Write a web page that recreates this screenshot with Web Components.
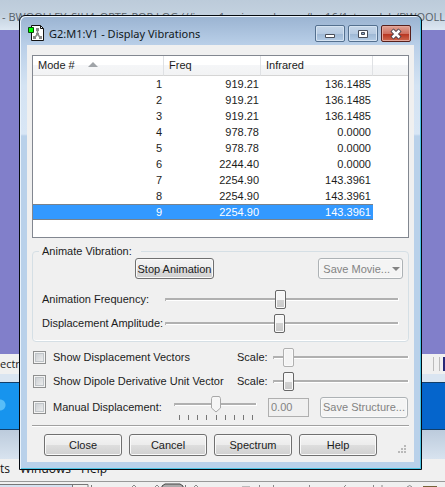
<!DOCTYPE html>
<html lang="en">
<head>
<meta charset="utf-8">
<title>Display Vibrations</title>
<style>
html, body { margin: 0; height: 100%; }
body { font: 11px/16px "Liberation Sans", Arial, sans-serif; color: #1c1c1c; overflow: hidden; }
</style>
</head>
<body>
<app-desktop>
  <vib-window heading="G2:M1:V1 - Display Vibrations">
    <mode-list></mode-list>
    <group-box heading="Animate Vibration:">
      <animation-controls></animation-controls>
    </group-box>
    <display-options></display-options>
    <dialog-actions></dialog-actions>
  </vib-window>
</app-desktop>
<script>
const BUTTON_CSS = `
button { box-sizing: border-box; height: 21px; padding: 0; font: inherit; color: #1c1c1c; border: 1px solid #707070; border-radius: 3px;
  background: linear-gradient(#f4f4f4, #ececec 50%, #dedede 50%, #d0d0d0); box-shadow: inset 0 0 0 1px #fafafa; white-space: nowrap; }
button:disabled { color: #838383; border-color: #adb2b5; background: #f4f4f4; }
`;

function define(name, html, setup) {
  const template = document.createElement('template');
  template.innerHTML = html;
  customElements.define(name, class extends HTMLElement {
    constructor() {
      super();
      this.attachShadow({ mode: 'open' }).append(template.content.cloneNode(true));
    }
    connectedCallback() { if (setup) setup(this, this.shadowRoot); }
  });
}

define('trim-slider', `
<style>
:host { display: block; min-width: 0; }
input { -webkit-appearance: none; appearance: none; display: block; width: 100%; height: 19px; margin: 0; background: none; }
input::-webkit-slider-runnable-track { height: 3px; background: linear-gradient(#b0b0b0 0 2px, #fff 2px); border-left: 1px solid #b4b4b4; border-right: 1px solid #fff; box-sizing: border-box; }
input::-webkit-slider-thumb { -webkit-appearance: none; box-sizing: border-box; width: 11px; height: 19px; margin-top: -8px;
  border: 1px solid #666; border-radius: 2px; background: linear-gradient(#f5f5f5 50%, #d2d2d2 50%, #c8c8c8); box-shadow: inset 0 0 0 1px #fafafa; }
input:disabled::-webkit-slider-thumb { border-color: #b0b0b0; background: #f4f4f4; }
:host([pointed]) input { height: 17px; }
:host([pointed]) input::-webkit-slider-thumb { width: 10px; height: 17px; margin-top: -7px; border: 0; border-radius: 0; box-shadow: none;
  background: url("data:image/svg+xml,%3Csvg xmlns='http://www.w3.org/2000/svg' width='10' height='17'%3E%3Cpath d='M.5 2.500l1-2h7l1 2v9.500l-4.500 4-4.500-4z' fill='%23f6f6f6' stroke='%23a8a8a8'/%3E%3C/svg%3E"); }
.ticks { display: none; justify-content: space-between; padding: 2px 4px 0 5px; }
:host([pointed]) .ticks { display: flex; }
.ticks i { width: 1px; height: 5px; background: #777; }
</style>
<input type="range" min="0" max="1000">
<div class="ticks"><i></i><i></i><i></i><i></i><i></i><i></i><i></i><i></i><i></i></div>
`, (host, root) => {
  const input = root.querySelector('input');
  input.value = host.getAttribute('value');
  input.disabled = host.hasAttribute('disabled');
  input.setAttribute('aria-label', host.getAttribute('label'));
});

define('check-option', `
<style>
:host { display: block; }
label { display: flex; align-items: center; gap: 7px; white-space: nowrap; }
input { -webkit-appearance: none; appearance: none; box-sizing: border-box; flex: none; width: 13px; height: 13px; margin: 0; border: 1px solid #8e8f8f;
  background: linear-gradient(135deg, #c6cace, #f3f3f3); box-shadow: inset 0 0 0 1px #f4f4f4, inset 0 0 0 2px #bfc4c8; }
input:checked { background: #4b6097; }
</style>
<label><input type="checkbox"><span><slot></slot></span></label>
`);

define('mode-list', `
<style>
:host { display: block; box-sizing: border-box; height: 183px; border: 1px solid #828790; background: #fff; overflow: hidden; }
table { width: 100%; table-layout: fixed; border-collapse: separate; border-spacing: 0; }
th { padding: 0 0 0 5px; text-align: left; font-weight: normal; line-height: 19px; border-right: 1px solid #dfe1e4; border-bottom: 1px solid #d5d5d5;
  background: linear-gradient(#fff 50%, #f5f6f8 50%, #f2f3f4); box-sizing: border-box; }
th:last-child { border-right: 0; }
td { height: 16px; padding: 0 2px 0 0; text-align: right; line-height: 16px; }
.selected td { height: 16px; background: #3399ff; color: #fff; box-shadow: inset 0 1px #78828c, inset 0 -1px #78828c; }
.selected td:last-child { background: none; box-shadow: none; }
.sort { display: inline-block; margin-left: 13px; vertical-align: 2px; border: 5px solid transparent; border-top: 0; border-bottom-color: #a0a4a8; }
</style>
<table>
<colgroup><col style="width:131px"><col style="width:97px"><col style="width:112px"><col></colgroup>
<thead><tr><th>Mode #<span class="sort"></span></th><th>Freq</th><th>Infrared</th><th></th></tr></thead>
<tbody></tbody>
</table>
`, (host, root) => {
  const rows = [['919.21', '136.1485'], ['919.21', '136.1485'], ['919.21', '136.1485'], ['978.78', '0.0000'], ['978.78', '0.0000'],
    ['2244.40', '0.0000'], ['2254.90', '143.3961'], ['2254.90', '143.3961'], ['2254.90', '143.3961']];
  root.querySelector('tbody').innerHTML = rows.map(([freq, ir], i) =>
    `<tr${i === 8 ? ' class="selected"' : ''}><td>${i + 1}</td><td>${freq}</td><td>${ir}</td><td></td></tr>`).join('');
});

define('group-box', `
<style>
:host { display: block; margin-top: 6px; }
fieldset { margin: 0; padding: 0 5px 6px 6px; border: 1px solid #d5dfe5; border-radius: 4px; min-width: 0; box-shadow: inset 0 -1px #fff; }
legend { padding: 0 9px 0 3px; line-height: 14px; }
</style>
<fieldset><legend></legend><slot></slot></fieldset>
`, (host, root) => { root.querySelector('legend').textContent = host.getAttribute('heading'); });

define('animation-controls', `
<style>
${BUTTON_CSS}
:host { display: block; }
.buttons { display: flex; justify-content: space-between; padding: 0 0 0 96px; }
.stop { width: 79px; }
.movie { width: 85px; display: flex; align-items: center; justify-content: flex-end; gap: 2px; padding-right: 2px; }
.movie i { border: 4px solid transparent; border-bottom: 0; border-top-color: #838383; }
.row { display: grid; grid-template-columns: 118px 1fr; align-items: center; gap: 5px; height: 24px; padding: 0 4px 0 3px; white-space: nowrap; }
.rows { padding-top: 8px; }
</style>
<div class="buttons"><button class="stop">Stop Animation</button><button class="movie" disabled>Save Movie...<i></i></button></div>
<div class="rows">
<div class="row"><span>Animation Frequency:</span><trim-slider value="493" label="Animation Frequency"></trim-slider></div>
<div class="row"><span>Displacement Amplitude:</span><trim-slider value="489" label="Displacement Amplitude"></trim-slider></div>
</div>
`);

define('display-options', `
<style>
${BUTTON_CSS}
:host { display: block; padding: 3px 0 4px 1px; border-bottom: 1px solid #a0a0a0; box-shadow: 0 1px #fff; }
.row { display: grid; grid-template-columns: 199px 31px 1fr; gap: 5px; align-items: center; height: 24px; }
.manual { display: flex; align-items: center; height: 28px; padding-right: 1px; }
.manual check-option { width: 141px; }
.manual trim-slider { flex: 1; padding-top: 2px; }
.manual input { box-sizing: border-box; width: 41px; height: 19px; margin: 0 11px 0 11px; padding: 0 2px; border: 1px solid #afafaf; background: #f0f0f0; color: #838383; font: inherit; }
.manual button { width: 88px; }
</style>
<div class="row"><check-option>Show Displacement Vectors</check-option><span>Scale:</span><trim-slider value="72" disabled label="Displacement vector scale"></trim-slider></div>
<div class="row"><check-option>Show Dipole Derivative Unit Vector</check-option><span>Scale:</span><trim-slider value="72" label="Dipole vector scale"></trim-slider></div>
<div class="manual"><check-option>Manual Displacement:</check-option><trim-slider pointed value="500" disabled label="Manual displacement"></trim-slider><input value="0.00" disabled aria-label="Displacement value"><button disabled>Save Structure...</button></div>
`);

define('dialog-actions', `
<style>
${BUTTON_CSS}
:host { display: flex; gap: 7px; padding: 8px 2px 6px 12px; }
button { flex: 0 1 78px; height: 22px; }
svg { margin: 11px 0 0 auto; }
</style>
<button>Close</button><button>Cancel</button><button>Spectrum</button><button>Help</button>
<svg width="9" height="9" fill="#b9b9b9"><path d="M6 0h2v2h-2zM3 3h2v2h-2zM6 3h2v2h-2zM0 6h2v2h-2zM3 6h2v2h-2zM6 6h2v2h-2z"/></svg>
`);

define('vib-window', `
<style>
:host { display: flex; flex-direction: column; box-sizing: border-box; border: 1px solid #050a10; border-radius: 6px 6px 0 0; padding: 1px 7px 7px;
  background: linear-gradient(#9ab3d1, #b9cfe8 29px, #d4e3f3 70px, #d8e6f5 118px, #b9d1ea 120px); box-shadow: inset 1px 1px #eaf3fb, inset -1px -1px #4cc4e4; }
header { display: flex; align-items: flex-start; height: 28px; color: #101820; }
.icon { flex: none; margin: 8px 4px 0 1px; }
h1 { flex: 1; margin: 9px 0 0; font: 11px/16px "Noto Sans", sans-serif; white-space: nowrap; }
nav { display: flex; gap: 3px; padding: 8px 3px 0 0; }
nav button { box-sizing: border-box; width: 30px; height: 17px; padding: 0; display: grid; place-items: center; border: 1px solid #54708f; border-radius: 2px;
  background: linear-gradient(#c5d6e9, #b7cbe2 50%, #9cb6d3 50%, #b4cce6); box-shadow: inset 0 0 0 1px #d5e3f2; }
nav .close { border-color: #57201c; background: linear-gradient(#e0a295, #cf7060 50%, #b5301c 50%, #d0694f); box-shadow: inset 0 0 0 1px #e5a79b; }
main { box-sizing: border-box; padding: 10px 5px 0; background: #f0f0f0; }
</style>
<header>
<svg class="icon" width="17" height="17" viewBox="0 0 17 17"><path d="M3.500.5h9l3 3v12h-12z" fill="#fff" stroke="#111"/><path d="M12.500.5v3h3" fill="none" stroke="#111"/><path d="M9.500 4v5l-3 4M9.500 9l3 4" fill="none" stroke="#888" stroke-width="1.500"/><path d="M8 3h3v3H8zM8 8h3v2H8zM5 11h3v3H5zM11 11h3v3h-3z" fill="#888"/><path d="M.5 2.500h5v5h-5z" fill="#0f0" stroke="#064806"/></svg>
<h1></h1>
<nav>
<button aria-label="Minimize"><svg width="12" height="12"><path d="M1.500 6.500h9v3h-9z" fill="#fff" stroke="#484d58"/></svg></button>
<button aria-label="Maximize"><svg width="12" height="12"><path d="M1.500 2.500h9v7h-9z" fill="#fff" stroke="#484d58"/><path d="M4.500 4.500h3v2h-3z" fill="#8ca8cc" stroke="#484d58"/></svg></button>
<button class="close" aria-label="Close window"><svg width="12" height="12"><path d="M2 2l8 8M10 2l-8 8" stroke="#47404a" stroke-width="4.500"/><path d="M2.500 2.500l7 7M9.500 2.500l-7 7" stroke="#fff" stroke-width="2.500"/></svg></button>
</nav>
</header>
<main><slot></slot></main>
`, (host, root) => { root.querySelector('h1').textContent = host.getAttribute('heading'); });

define('app-desktop', `
<style>
:host { display: grid; position: relative; height: 100%; overflow: hidden; grid-template-rows: 30px 324px 20px 8px 48px 29px 22px 1fr; grid-template-columns: minmax(0, 1fr); background: #f0f0f0; }
.title { padding: 9px 0 0 2px; background: linear-gradient(#bccbda, #c3d1df 50%, #dce7f2); font: 11px/16px "Open Sans", "Noto Sans", sans-serif; color: #566069; white-space: nowrap; display: flex; justify-content: space-between; }
.canvas { background: #817fca; }
.status { display: flex; justify-content: space-between; background: #f0f0f0; }
.status span { font: 11px/20px "Open Sans", "Noto Sans", sans-serif; }
.status b { width: 12px; margin: 3px 0; background: linear-gradient(90deg, #bbb 1px, transparent 1px 6px, #bbb 6px 7px, transparent 7px 10px, #282878 10px); }
.edge { background: #dae5f1; }
.task { background: radial-gradient(circle at 0 22px, #58bdf8 5px, transparent 6px), linear-gradient(90deg, #1794ee 20px, #0565cc 80%); border-top: 1px solid #123e68; border-bottom: 1px solid #123e68; box-sizing: border-box; }
.lower { background: linear-gradient(#bccbdc, #d8e3ef); }
.menu { display: flex; gap: 10px; font: 12px/20px "Open Sans", "Noto Sans", sans-serif; color: #111; overflow: hidden; }
.tools { border-top: 1px solid #999; overflow: hidden; }
.tools svg { display: block; width: 100%; height: 6px; }
::slotted(vib-window) { position: absolute; left: 19px; right: 23px; top: 15px; }
</style>
<div class="title"><span>- BWOOLLEY_SIH4_OPTF_POP.LOG (//icnas1.cc.ic.ac.uk</span><span>/bw16/1styearlab/BWOOLL</span></div>
<div class="canvas"></div>
<div class="status"><span>ectro</span><b></b></div>
<div class="edge"></div>
<div class="task"></div>
<div class="lower"></div>
<div class="menu"><span>ts</span><span>Windows</span><span>Help</span></div>
<div class="tools"><svg viewBox="0 0 445 6" preserveAspectRatio="none"><path d="M0 3h72v3H0z" fill="#d5e2f0"/><path d="M0 2.500h88v4M72.500 3v3M91.500 3v3M185.500 3v3" fill="none" stroke="#777"/><path d="M162 6V4l3-2h15l3 2v2z" fill="#aaa" stroke="#444"/><path d="M423 4h14v2h-14z" fill="#776238"/><path d="M242 4h8v2h-8z" fill="#bbb"/><path d="M132 5l2-2 2 2M155 5l2-2 2 2M194 5l2-2 2 2M259.500 3v3M273.500 3v3M309.500 3v3M373.500 3v3M382 3v3M407 5q3-3 5 0M344 5l2-2" fill="none" stroke="#888"/></svg></div>
<slot></slot>
`);
</script>
</body>
</html>
